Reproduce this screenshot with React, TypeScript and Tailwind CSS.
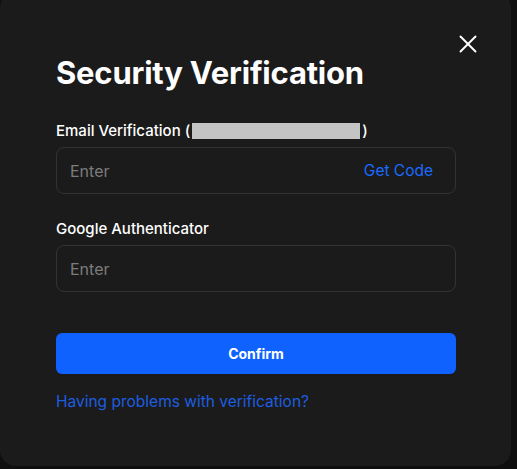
import { X } from "lucide-react"

function Field({ label, action }: { label: React.ReactNode; action?: string }) {
  return (
    <div>
      <div className="mb-[5px] text-[15px] font-medium leading-[22px] text-white">{label}</div>
      <div className="flex h-[47px] items-center justify-between rounded-lg border border-[#333333] px-[13px]">
        <input
          placeholder="Enter"
          className="w-full bg-transparent text-[16px] text-white outline-none placeholder:text-[#7c7c7c]"
        />
        {action && <button className="shrink-0 pr-[9px] text-[15.5px] text-[#1a6bff]">{action}</button>}
      </div>
    </div>
  )
}

export default function App() {
  return (
    <main
      className="h-[469px] w-[517px] overflow-hidden bg-[#0f0f0f]"
      style={{ fontFamily: "Inter, 'Noto Sans', sans-serif" }}
    >
      <div className="relative -mt-2 h-[474px] w-[511px] rounded-2xl bg-[#1b1b1b] pl-14 pr-[55px] pt-[57px]">
        <button className="absolute right-[28px] top-[37px] text-white">
          <X size={30} strokeWidth={1.5} />
        </button>
        <h1 className="text-[31px] font-bold leading-[48px] tracking-[-0.2px] text-white">Security Verification</h1>

        <div className="mt-[23px]">
          <Field
            label={
              <span className="flex items-center">
                Email Verification (
                <span className="mx-[2px] inline-block h-[16px] w-[168px] bg-[#c4c4c4]" />)
              </span>
            }
            action="Get Code"
          />
        </div>
        <div className="mt-[24px]">
          <Field label="Google Authenticator" />
        </div>

        <button className="mt-[41px] h-[41px] w-full rounded-md bg-[#0f62fe] text-[14px] font-bold text-white">
          Confirm
        </button>

        <a href="#" className="mt-[16px] block text-[15.5px] leading-[24px] text-[#1d5ee0]">
          Having problems with verification?
        </a>
      </div>
    </main>
  )
}
